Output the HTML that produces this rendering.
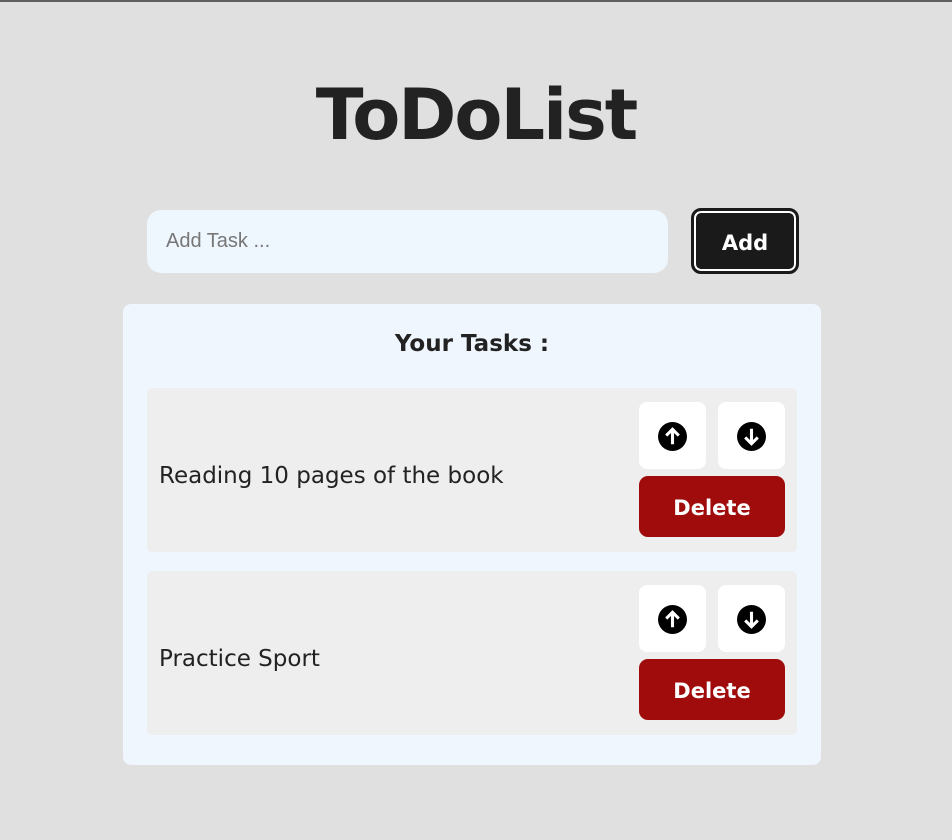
<!DOCTYPE html>
<html><head><style>
body{margin:0;width:952px;height:840px;background:#e0e0e0;border-top:2px solid #5f5f5f;box-sizing:border-box;position:relative;font-family:"DejaVu Sans","Liberation Sans",sans-serif;color:#222;overflow:hidden}
h1{position:absolute;left:0;width:952px;top:72px;margin:0;text-align:center;font-size:70px;font-weight:bold;letter-spacing:-2px;color:#222}
.inp{position:absolute;left:147px;top:208px;width:521px;height:63px;background:#eef6fe;border-radius:14px;font-family:"Liberation Sans",sans-serif;font-size:20px;color:#777;line-height:63px;padding-left:19px;box-sizing:border-box}
.add{position:absolute;left:691px;top:206px;width:108px;height:66px;background:#1a1a1a;border-radius:10px;box-sizing:border-box;border:3px solid #1a1a1a;box-shadow:inset 0 0 0 2px #fff;color:#fff;font-weight:bold;font-size:21px;text-align:center;line-height:64px}
.panel{position:absolute;left:123px;top:302px;width:698px;height:461px;background:#eff6fd;border-radius:8px}
.title{position:absolute;top:27px;width:100%;text-align:center;font-weight:bold;font-size:23px}
.row{position:absolute;left:24px;width:650px;height:164px;background:#eeeeee;border-radius:5px}
.row .t{position:absolute;left:12px;top:75px;font-size:23px;color:#222}
.b{position:absolute;width:67px;height:67px;background:#fff;border-radius:8px;top:14px}
.b svg{position:absolute;left:19px;top:20px}
.del{position:absolute;left:492px;top:88px;width:146px;height:61px;background:#a00c0c;border-radius:9px;color:#fff;font-weight:bold;font-size:21px;text-align:center;line-height:64px}
</style></head><body>
<h1>ToDoList</h1>
<div class="inp">Add Task ...</div>
<div class="add">Add</div>
<div class="panel">
<div class="title">Your Tasks :</div>
<div class="row" style="top:84px"><div class="t">Reading 10 pages of the book</div>
<div class="b" style="left:492px"><svg width="29" height="29" viewBox="0 0 30 30"><circle cx="15" cy="15" r="15" fill="#000"/><path d="M15 23V8M8.5 14L15 7.5 21.5 14" stroke="#fff" stroke-width="3.2" fill="none"/></svg></div>
<div class="b" style="left:571px"><svg width="29" height="29" viewBox="0 0 30 30"><circle cx="15" cy="15" r="15" fill="#000"/><path d="M15 7v15M8.5 16L15 22.5 21.5 16" stroke="#fff" stroke-width="3.2" fill="none"/></svg></div>
<div class="del">Delete</div></div>
<div class="row" style="top:267px"><div class="t">Practice Sport</div>
<div class="b" style="left:492px"><svg width="29" height="29" viewBox="0 0 30 30"><circle cx="15" cy="15" r="15" fill="#000"/><path d="M15 23V8M8.5 14L15 7.5 21.5 14" stroke="#fff" stroke-width="3.2" fill="none"/></svg></div>
<div class="b" style="left:571px"><svg width="29" height="29" viewBox="0 0 30 30"><circle cx="15" cy="15" r="15" fill="#000"/><path d="M15 7v15M8.5 16L15 22.5 21.5 16" stroke="#fff" stroke-width="3.2" fill="none"/></svg></div>
<div class="del">Delete</div></div>
</div>
</body></html>
